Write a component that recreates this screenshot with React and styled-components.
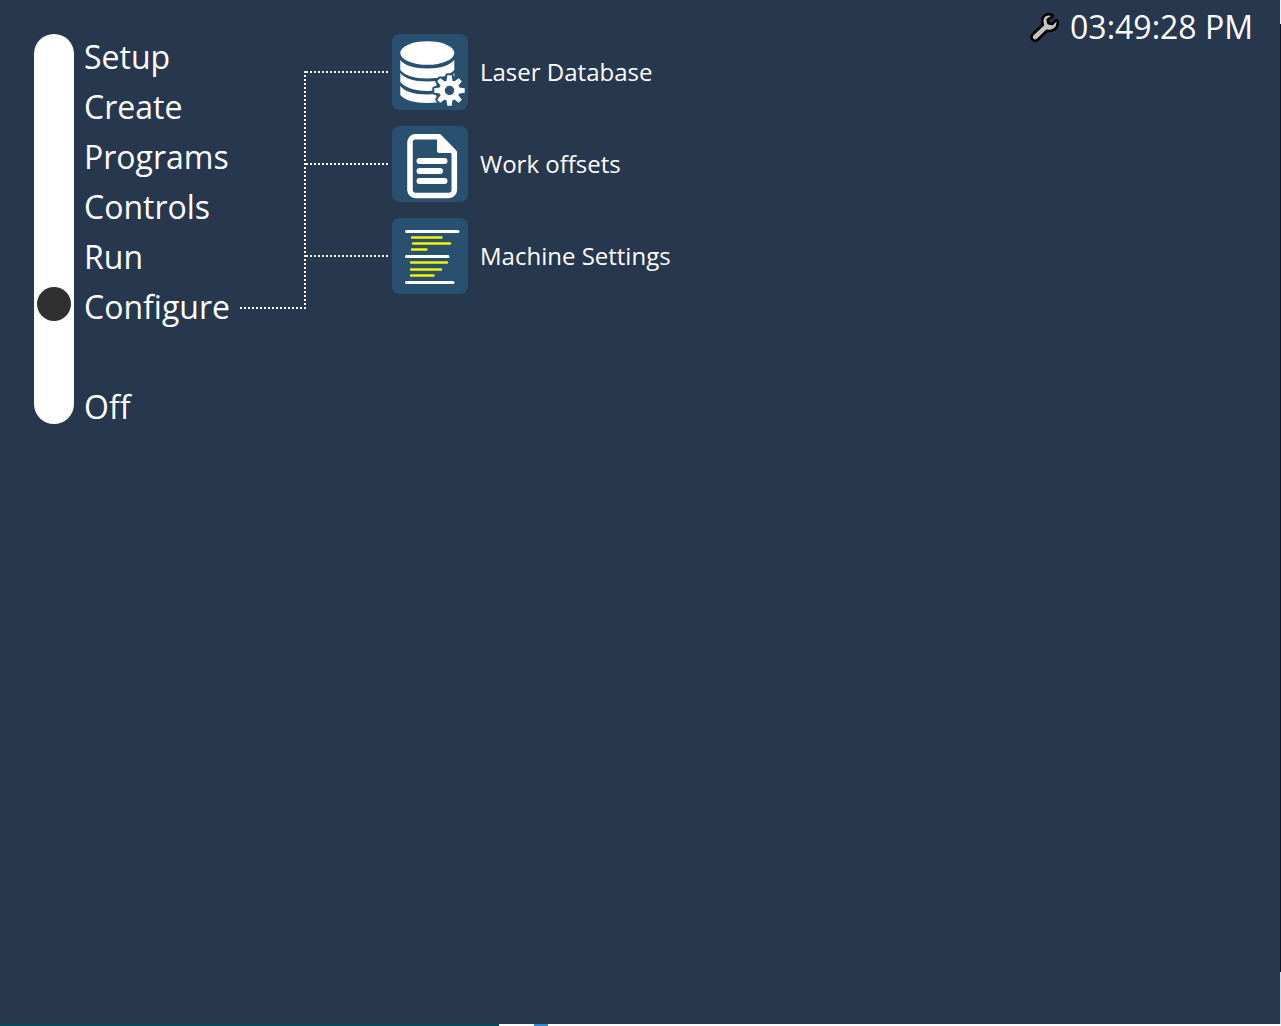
import React, { useState } from "react";
import styled, { createGlobalStyle } from "styled-components";

const GlobalStyle = createGlobalStyle`
  *, *::before, *::after { box-sizing: border-box; }
  body {
    margin: 0;
    background: #27374d;
    color: #ffffff;
    font-family: "Open Sans", "Noto Sans", sans-serif;
  }
`;

const Screen = styled.div`
  display: grid;
  grid-template-columns: 1fr 1px;
  grid-template-rows: 1fr 2px;
  min-height: 100vh;
`;

const Main = styled.main`
  display: flex;
  justify-content: space-between;
  align-items: flex-start;
  padding-left: 34px;
  padding-right: 27px;
`;

const Navigation = styled.div`
  display: flex;
  align-items: flex-start;
  padding-top: 34px;
`;

const Selector = styled.input`
  appearance: none;
  writing-mode: vertical-lr;
  direction: ltr;
  width: 40px;
  height: 390px;
  margin: 0;
  padding: 3px;
  border-radius: 20px;
  background: #ffffff;
  cursor: pointer;

  &::-webkit-slider-runnable-track {
    width: 34px;
  }

  &::-webkit-slider-thumb {
    appearance: none;
    width: 34px;
    height: 34px;
    border-radius: 50%;
    background: #303030;
  }
`;

const Menu = styled.nav`
  display: grid;
  grid-auto-rows: 50px;
  width: 206px;
  padding-left: 10px;
`;

const MenuButton = styled.button`
  grid-row: ${(p) => p.$row};
  padding: 0;
  border: 0;
  background: none;
  color: inherit;
  font: 32px/46px "Open Sans", "Noto Sans", sans-serif;
  text-align: left;
  align-self: start;
  justify-self: start;
  cursor: pointer;
`;

const Branches = styled.svg`
  width: 148px;
  height: 276px;
  margin-left: -40px;
  margin-right: 4px;
  flex: none;
`;

const Tools = styled.section`
  display: flex;
  flex-direction: column;
  align-items: flex-start;
  gap: 16px;
`;

const ToolButton = styled.button`
  display: flex;
  align-items: center;
  gap: 12px;
  padding: 0;
  border: 0;
  background: none;
  color: inherit;
  font: 24px/32px "Open Sans", "Noto Sans", sans-serif;
  cursor: pointer;
`;

const Tile = styled.span`
  display: block;
  width: 76px;
  height: 76px;
  border-radius: 8px;
  background: #2a5070;

  svg { display: block; }
`;

const Status = styled.header`
  display: flex;
  align-items: center;
  gap: 10px;
  padding-top: 4px;
  font-size: 32px;
  line-height: 46px;
`;

const SideEdge = styled.div`
  background: linear-gradient(#f0f0f4 24px, #0c1420 24px calc(100% - 52px), #d8d8dc calc(100% - 52px));
`;

const BottomEdge = styled.div`
  grid-column: 1 / -1;
  display: grid;
  grid-template-columns: 499fr 35fr 14fr 733fr;
`;

const Strip = styled.div`
  background: ${(p) => p.$color};
`;

const MENU = [
  { label: "Setup", position: 0 },
  { label: "Create", position: 1 },
  { label: "Programs", position: 2 },
  { label: "Controls", position: 3 },
  { label: "Run", position: 4 },
  { label: "Configure", position: 5 },
  { label: "Off", position: 7 },
];

const EDGE_COLORS = ["#04485a", "#fafafa", "#2b8ad0", "#fafafa"];

const TEETH = [0, 45, 90, 135, 180, 225, 270, 315];

function DatabaseIcon() {
  return (
    <svg width="76" height="76" viewBox="0 0 76 76" aria-hidden="true">
      <g fill="#fff">
        <ellipse cx="35.300" cy="19" rx="27" ry="11.800" />
        <path d="M8.300 26C12 31 22 34.500 35.300 34.500S58 31 62.300 26v10C58 41 48 44.500 35.300 44.500S12 41 8.300 36z" />
        <path d="M8.300 39C12 44 22 47.500 35.300 47.500S58 44 62.300 39v9C58 53 48 57 35.300 57S12 53 8.300 48z" />
        <path d="M8.300 52C12 57 22 60.500 35.300 60.500S58 57 62.300 52v9C58 66 48 69 35.300 69S12 66 8.300 61z" />
      </g>
      <g transform="translate(57.500 56.500)">
        <g fill="#2a5070" stroke="#2a5070" strokeWidth="4.500" strokeLinejoin="round">
          <circle r="12" />
          {TEETH.map((a) => (
            <path key={a} d="M-3-8-2-15h4L3-8z" transform={`rotate(${a})`} />
          ))}
        </g>
        <g fill="#fff">
          {TEETH.map((a) => (
            <path key={a} d="M-3.200-8-2.200-15.200h4.400L3.200-8z" transform={`rotate(${a})`} />
          ))}
        </g>
        <circle r="7.500" fill="none" stroke="#fff" strokeWidth="5.500" />
      </g>
    </svg>
  );
}

function DocumentIcon() {
  return (
    <svg width="76" height="76" viewBox="0 0 76 76" fill="none" stroke="#fff" aria-hidden="true">
      <path d="M23.500 10.800H47L62.300 26.500V64a5.500 5.500 0 0 1-5.500 5.500H23.500A5.500 5.500 0 0 1 18 64V16.300a5.500 5.500 0 0 1 5.500-5.500z" strokeWidth="5.600" strokeLinejoin="round" />
      <path d="M45 9v15.500a2.500 2.500 0 0 0 2.500 2.500H64z" fill="#fff" stroke="none" />
      <path d="M27.500 35h25M27.500 45h20.500M27.500 55h25" strokeWidth="6" strokeLinecap="round" />
    </svg>
  );
}

function ListingIcon() {
  return (
    <svg width="76" height="76" viewBox="0 0 76 76" fill="none" strokeLinecap="round" aria-hidden="true">
      <path d="M14.500 13.500h51.500M14.500 38.500h41.500M14.500 64.500h46.500" stroke="#fff" strokeWidth="3" />
      <path d="M20 19.500h29.500M21 25.500h37M20 31.500h14.500M19 44.500h36M19 51.500h30M19 57.500h22.500" stroke="#f4f400" strokeWidth="2.400" />
    </svg>
  );
}

function WrenchIcon() {
  return (
    <svg width="30" height="32" viewBox="0 0 30 32" aria-hidden="true">
      <path
        d="M22.300 4C17 1.500 11.800 5 12.200 10.500c.1 1.400.4 2.300.7 3.300L3 23c-2 2-1.900 4.200-.2 5.800 1.700 1.500 3.700 1.200 5.200-.3l9-8.700c5.500 1 11-2 10.800-8.500-.2-2.200-1.600-2.500-2.800-1.300L22.200 13l-3.700-.8-.8-3.600 4-2.500c1-.7 1.300-1.600.6-2.100z"
        fill="#c4c4c4"
        stroke="#000"
        strokeWidth="2.600"
        strokeLinejoin="round"
      />
    </svg>
  );
}

const TOOLS = [
  { label: "Laser Database", Icon: DatabaseIcon },
  { label: "Work offsets", Icon: DocumentIcon },
  { label: "Machine Settings", Icon: ListingIcon },
];

export default function App() {
  const [position, setPosition] = useState(5);

  return (
    <>
      <GlobalStyle />
      <Screen>
        <Main>
          <Navigation>
            <Selector
              type="range"
              min="0"
              max="7"
              step="1"
              aria-label="Mode"
              value={position}
              onChange={(e) => setPosition(Number(e.target.value))}
            />
            <Menu aria-label="Main menu">
              {MENU.map((item) => (
                <MenuButton
                  key={item.label}
                  type="button"
                  $row={item.position + 1}
                  onClick={() => setPosition(item.position)}
                >
                  {item.label}
                </MenuButton>
              ))}
            </Menu>
            <Branches viewBox="0 0 148 276" fill="none" stroke="#fff" strokeWidth="2" aria-hidden="true">
              <path
                d="M0 274H66M65 37V275M66 38H148M66 130H148M66 222H148"
                strokeDasharray="2 2"
                shapeRendering="crispEdges"
              />
            </Branches>
            <Tools aria-label="Configure">
              {TOOLS.map(({ label, Icon }) => (
                <ToolButton key={label} type="button">
                  <Tile><Icon /></Tile>
                  {label}
                </ToolButton>
              ))}
            </Tools>
          </Navigation>
          <Status>
            <WrenchIcon />
            <time>03:49:28 PM</time>
          </Status>
        </Main>
        <SideEdge />
        <BottomEdge>
          {EDGE_COLORS.map((color, index) => (
            <Strip key={index} $color={color} />
          ))}
        </BottomEdge>
      </Screen>
    </>
  );
}
